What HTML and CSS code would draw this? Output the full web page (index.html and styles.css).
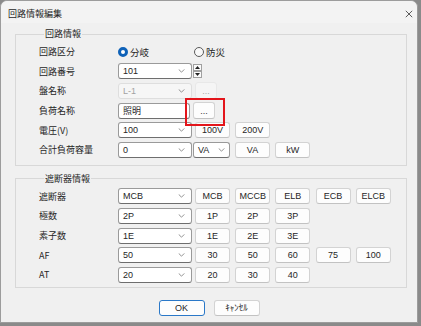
FILE: index.html
```html
<!DOCTYPE html>
<html lang="ja">
  <head>
    <meta charset="UTF-8" />
    <title>回路情報編集</title>
    <link rel="stylesheet" href="styles.css">
  </head>
  <body>
    <div class="window">
      <!-- タイトルバー -->
      <div class="titlebar">
        <span class="title">回路情報編集</span>
        <svg class="close" viewBox="0 0 10 10"><path d="M1 1 9 9M9 1 1 9"/></svg>
      </div>

      <!-- 回路情報 -->
      <fieldset class="group g1">
        <legend>回路情報</legend>
        <div class="row">
          <span class="lbl">回路区分</span>
          <label class="radio"><i class="dot on"></i>分岐</label>
          <label class="radio"><i class="dot"></i>防災</label>
        </div>
        <div class="row">
          <span class="lbl">回路番号</span>
          <div class="combo"><span>101</span><svg class="chev" viewBox="0 0 8 5"><path d="M.5.5 4 4 7.5.5"/></svg></div>
          <div class="spin">
            <span class="up"><svg viewBox="0 0 5 3"><path d="M0 3 2.5 0 5 3z"/></svg></span>
            <span class="down"><svg viewBox="0 0 5 3"><path d="M0 0 2.5 3 5 0z"/></svg></span>
          </div>
        </div>
        <div class="row">
          <span class="lbl">盤名称</span>
          <div class="combo disabled"><span>L-1</span><svg class="chev" viewBox="0 0 8 5"><path d="M.5.5 4 4 7.5.5"/></svg></div>
          <div class="btns"><span class="btn dots disabled">...</span></div>
        </div>
        <div class="row">
          <span class="lbl">負荷名称</span>
          <div class="textbox">照明</div>
          <div class="btns"><span class="btn dots mark">...</span></div>
        </div>
        <div class="row">
          <span class="lbl">電圧(V)</span>
          <div class="combo"><span>100</span><svg class="chev" viewBox="0 0 8 5"><path d="M.5.5 4 4 7.5.5"/></svg></div>
          <div class="btns">
            <span class="btn">100V</span>
            <span class="btn">200V</span>
          </div>
        </div>
        <div class="row">
          <span class="lbl">合計負荷容量</span>
          <div class="combo"><span>0</span><svg class="chev" viewBox="0 0 8 5"><path d="M.5.5 4 4 7.5.5"/></svg></div>
          <div class="combo small"><span>VA</span><svg class="chev" viewBox="0 0 8 5"><path d="M.5.5 4 4 7.5.5"/></svg></div>
          <div class="btns tight">
            <span class="btn">VA</span>
            <span class="btn">kW</span>
          </div>
        </div>
      </fieldset>

      <!-- 遮断器情報 -->
      <fieldset class="group g2">
        <legend>遮断器情報</legend>
        <div class="row">
          <span class="lbl">遮断器</span>
          <div class="combo"><span>MCB</span><svg class="chev" viewBox="0 0 8 5"><path d="M.5.5 4 4 7.5.5"/></svg></div>
          <div class="btns">
            <span class="btn">MCB</span>
            <span class="btn">MCCB</span>
            <span class="btn">ELB</span>
            <span class="btn">ECB</span>
            <span class="btn">ELCB</span>
          </div>
        </div>
        <div class="row">
          <span class="lbl">極数</span>
          <div class="combo"><span>2P</span><svg class="chev" viewBox="0 0 8 5"><path d="M.5.5 4 4 7.5.5"/></svg></div>
          <div class="btns">
            <span class="btn">1P</span>
            <span class="btn">2P</span>
            <span class="btn">3P</span>
          </div>
        </div>
        <div class="row">
          <span class="lbl">素子数</span>
          <div class="combo"><span>1E</span><svg class="chev" viewBox="0 0 8 5"><path d="M.5.5 4 4 7.5.5"/></svg></div>
          <div class="btns">
            <span class="btn">1E</span>
            <span class="btn">2E</span>
            <span class="btn">3E</span>
          </div>
        </div>
        <div class="row">
          <span class="lbl">AF</span>
          <div class="combo"><span>50</span><svg class="chev" viewBox="0 0 8 5"><path d="M.5.5 4 4 7.5.5"/></svg></div>
          <div class="btns">
            <span class="btn">30</span>
            <span class="btn">50</span>
            <span class="btn">60</span>
            <span class="btn">75</span>
            <span class="btn">100</span>
          </div>
        </div>
        <div class="row">
          <span class="lbl">AT</span>
          <div class="combo"><span>20</span><svg class="chev" viewBox="0 0 8 5"><path d="M.5.5 4 4 7.5.5"/></svg></div>
          <div class="btns">
            <span class="btn">20</span>
            <span class="btn">30</span>
            <span class="btn">40</span>
          </div>
        </div>
      </fieldset>

      <!-- OK / キャンセル -->
      <div class="footer">
        <span class="btn wide default">OK</span>
        <span class="btn wide">ｷｬﾝｾﾙ</span>
      </div>
    </div>
  </body>
</html>
```

FILE: styles.css
```css
/* 初期化 */
* {
  margin: 0;
  padding: 0;
  box-sizing: border-box;
}

html,
body {
  width: 421px;
  height: 326px;
  background-color: #8a8a8a;
  overflow: hidden;
}

body {
  font-family: "Liberation Sans", "Noto Sans CJK JP", sans-serif;
  font-size: 9px;
  color: #262626;
}

/* ダイアログ本体 */
.window {
  width: 418px;
  height: 323px;
  background-color: #f0f0f0;
  border: 1px solid #9c9c9c;
  border-radius: 7px 7px 0 0;
  display: flex;
  flex-direction: column;
}

.titlebar {
  height: 22px;
  background-color: #f3f3f3;
  border-radius: 7px 7px 0 0;
  display: flex;
  align-items: center;
  justify-content: space-between;
  padding: 3px 4px 0 7px;
}
.title {
  font-family: "Noto Sans CJK JP", sans-serif;
}
.close {
  width: 8px;
  height: 8px;
  stroke: #333;
  stroke-width: 1;
  fill: none;
}

/* グループ枠 */
.group {
  margin: 3px 10px 0 14px;
  border: 1px solid #d8d8d8;
  padding: 0 0 5px 23px;
}
.group legend {
  font-family: "Noto Sans CJK JP", sans-serif;
  line-height: 16px;
  height: 16px;
  padding: 0 1px;
  margin-left: 5px;
}
.g2 {
  margin-top: 5px;
  padding-bottom: 2px;
}

.row {
  height: 19.6px;
  display: flex;
  align-items: center;
}
.lbl {
  width: 79px;
  font-family: "Noto Sans CJK JP", sans-serif;
  flex: none;
}

/* ラジオボタン */
.radio {
  width: 76px;
  display: flex;
  align-items: center;
  font-family: "Noto Sans CJK JP", sans-serif;
  font-size: 9.5px;
}
.dot {
  width: 10px;
  height: 10px;
  border-radius: 50%;
  border: 1px solid #5a5a5a;
  background-color: #f8f8f8;
  margin-right: 2px;
}
.dot.on {
  border: 3px solid #0f62b8;
  background-color: #fff;
}

/* コンボボックス */
.combo,
.textbox {
  width: 74px;
  height: 16px;
  flex: none;
  background-color: #fff;
  border: 1px solid #9a9a9a;
  border-bottom-color: #6e6e6e;
  border-radius: 3px;
  display: flex;
  align-items: center;
  justify-content: space-between;
  padding: 0 6px 0 4px;
}
.combo.small {
  width: 37px;
  margin-left: 1px;
  padding-right: 4px;
}
.combo.disabled {
  background-color: #f6f6f6;
  border-color: #dedede;
  color: #a2a2a2;
}
.chev {
  width: 7px;
  height: 4px;
  fill: none;
  stroke: #777;
  stroke-width: 1;
}
.textbox {
  width: 72px;
  font-family: "Noto Sans CJK JP", sans-serif;
}

/* スピンボタン */
.spin {
  margin-left: 1px;
  display: flex;
  flex-direction: column;
}
.spin span {
  width: 9px;
  height: 7px;
  border: 1px solid #a0a0a0;
  background-color: #fafafa;
  display: flex;
  align-items: center;
  justify-content: center;
}
.spin svg {
  width: 5px;
  height: 3px;
  fill: #222;
}

/* ボタン */
.btns {
  display: flex;
  gap: 5.2px;
  margin-left: 3px;
}
.btns.tight {
  margin-left: 5px;
}
.btn {
  width: 35px;
  height: 16px;
  background-color: #fdfdfd;
  border: 1px solid #d3d3d3;
  border-bottom-color: #c2c2c2;
  border-radius: 3px;
  display: flex;
  align-items: center;
  justify-content: center;
}
.btn.dots {
  width: 22px;
  height: 17px;
  color: #333;
}
.btn.disabled {
  background-color: #f5f5f5;
  border-color: #e8e8e8;
  color: #a8a8a8;
}
.btn.mark {
  position: relative;
}
.btn.mark::after {
  content: "";
  position: absolute;
  top: -5px;
  bottom: -8px;
  left: -9px;
  right: -11px;
  border: 2px solid #e3151b;
}

/* フッター */
.footer {
  flex: 1;
  display: flex;
  justify-content: center;
  gap: 9px;
  padding-top: 12px;
}
.btn.wide {
  width: 46px;
  font-family: "Liberation Sans", "Noto Sans CJK JP", sans-serif;
}
.btn.default {
  border: 1px solid #2a78c8;
}
```
